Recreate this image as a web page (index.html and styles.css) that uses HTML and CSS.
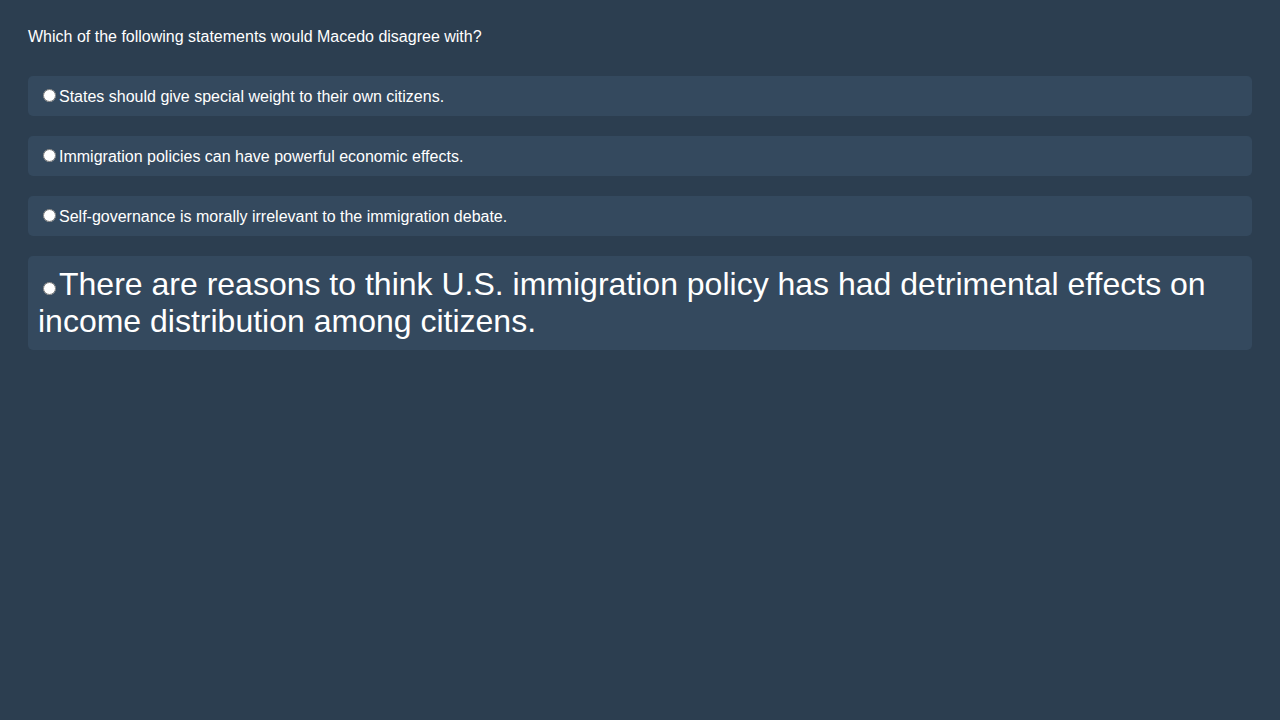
FILE: index.html
```html
<!DOCTYPE html>
<html>
<head>
<meta charset="utf-8">
<link rel="stylesheet" href="styles.css">
</head>
<body>
<div class="quiz">
  <p class="question">Which of the following statements would Macedo disagree with?</p>
  <label class="option"><input type="radio" name="q">States should give special weight to their own citizens.</label>
  <label class="option"><input type="radio" name="q">Immigration policies can have powerful economic effects.</label>
  <label class="option"><input type="radio" name="q">Self-governance is morally irrelevant to the immigration debate.</label>
  <label class="option big"><input type="radio" name="q">There are reasons to think U.S. immigration policy has had detrimental effects on income distribution among citizens.</label>
</div>
</body>
</html>
```
FILE: styles.css
```css
html, body {
  background: #2c3e50;
}
body {
  margin: 8px;
  font-family: "Liberation Sans", Arial, sans-serif;
  color: #ffffff;
  font-size: 16px;
}
.quiz {
  padding: 20px;
}
.question {
  margin: 0 0 30px 0;
}
.option {
  display: block;
  background: #34495e;
  border-radius: 5px;
  padding: 10px;
  margin-bottom: 20px;
}
.big {
  font-size: 32px;
}
```
